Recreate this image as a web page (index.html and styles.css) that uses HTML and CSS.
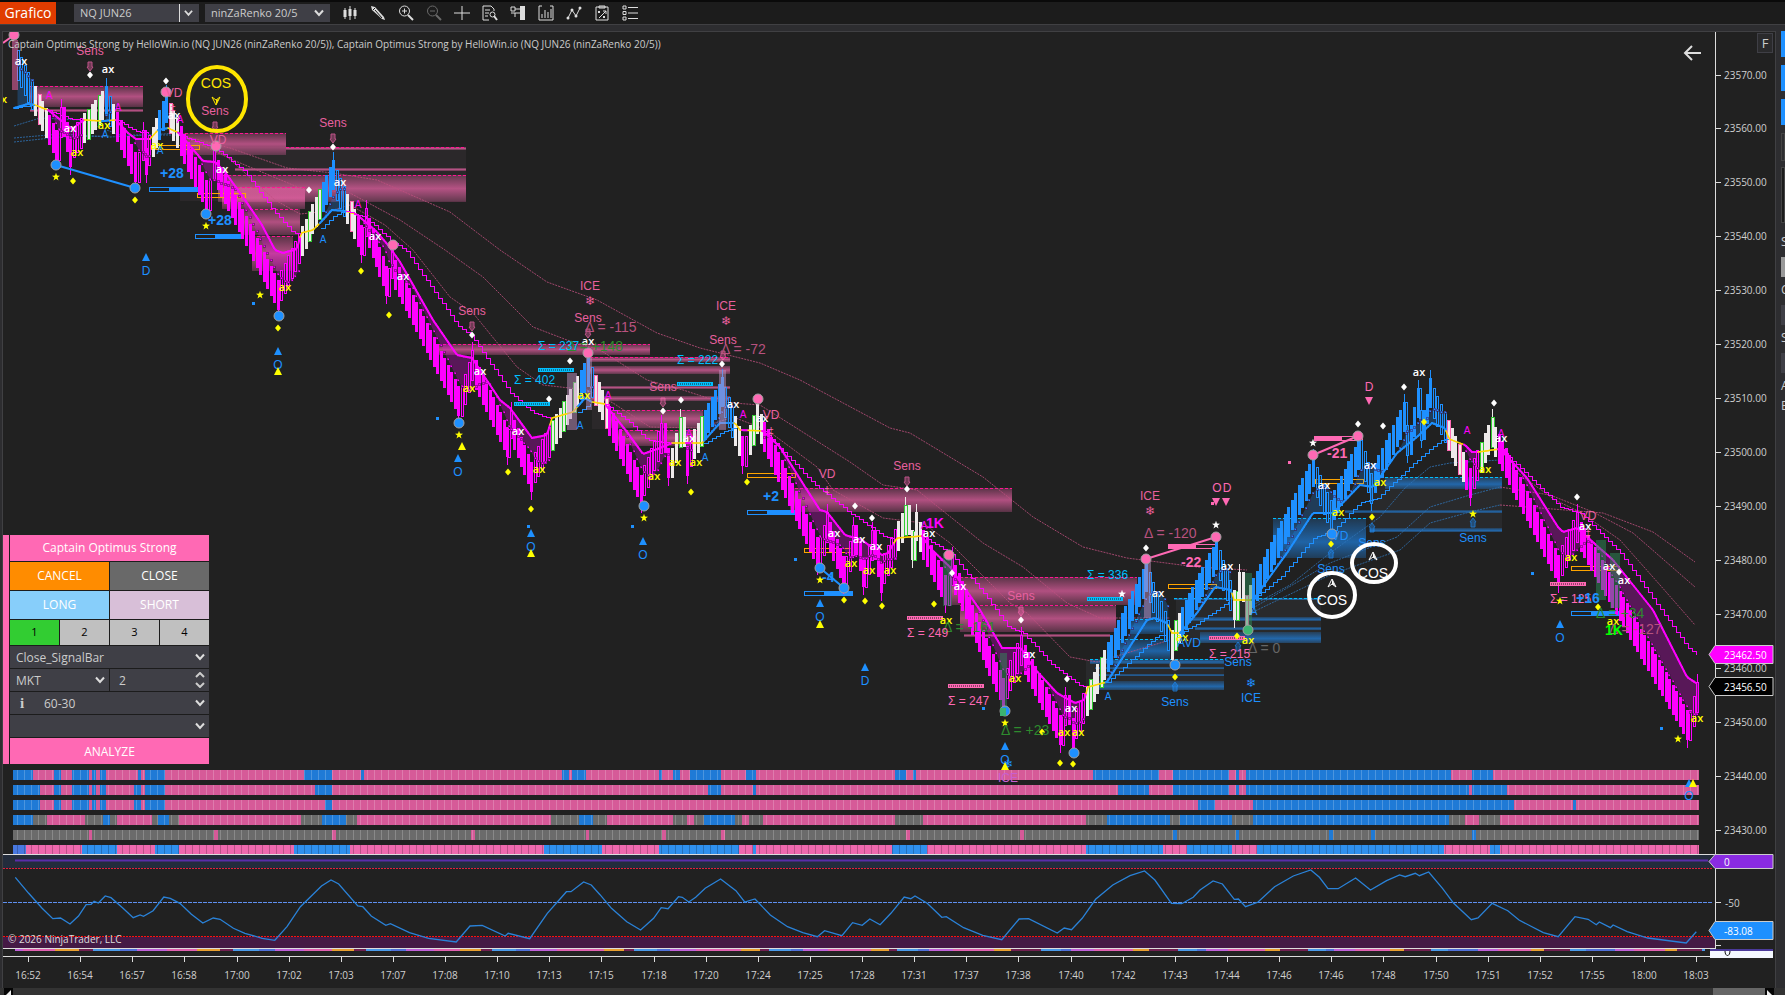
FILE: index.html
```html
<!DOCTYPE html>
<html lang="en">
<head>
<meta charset="utf-8">
<title>Grafico - NQ JUN26</title>
<link rel="stylesheet" href="styles.css">
</head>
<body>
<div class="app">
  <header class="toolbar">
    <h1 class="tab">Grafico</h1>
    <div class="combo combo-instrument">
      <select class="combo-field" aria-label="Instrument"><option>NQ JUN26</option></select>
      <svg class="chev" viewBox="0 0 10 8"><path d="M1 1.500 5 6l4-4.500"/></svg>
    </div>
    <div class="combo combo-interval">
      <select class="combo-field" aria-label="Interval"><option>ninZaRenko 20/5</option></select>
      <svg class="chev" viewBox="0 0 10 8"><path d="M1 1.500 5 6l4-4.500"/></svg>
    </div>
    <nav class="tools">
      <button class="tool" aria-label="Bar style"><svg viewBox="0 0 16 16"><path d="M3 3v11M8 1v14M13 3v11"/><path class="solid" d="M1.500 5h3v7h-3zM6.500 4h3v7h-3zM11.500 5h3v6h-3z"/></svg></button>
      <button class="tool" aria-label="Drawing tools"><svg viewBox="0 0 16 16"><path class="solid" d="M1 1l4 1 9 10 1 3-3-1L2 5z"/><path class="cut" d="M3 5l2-2M5 5l7 8"/></svg></button>
      <button class="tool" aria-label="Zoom in"><svg viewBox="0 0 16 16"><circle cx="6.500" cy="6" r="5"/><path d="M4 6h5M6.500 3.500v5"/><path class="thick" d="M10 10l5 5"/></svg></button>
      <button class="tool dim" aria-label="Zoom out"><svg viewBox="0 0 16 16"><circle cx="6.500" cy="6" r="5"/><path d="M4 6h5"/><path class="thick" d="M10 10l5 5"/></svg></button>
      <button class="tool" aria-label="Crosshair"><svg viewBox="0 0 16 16"><path d="M0 8h16M8 1v14"/></svg></button>
      <button class="tool" aria-label="Data box"><svg viewBox="0 0 16 16"><path d="M7 15H1V1h8l3 3v2M3 5h5M3 8h4M3 11h3"/><circle cx="10.500" cy="9.500" r="2.500"/><path class="thick" d="M12 11l3 4"/></svg></button>
      <button class="tool" aria-label="Chart trader"><svg viewBox="0 0 16 16"><path d="M1 2h4v4H1zM5 4h5M5 8h5M1 8h4v4"/><path class="solid" d="M10 1h5v14h-5z"/></svg></button>
      <button class="tool" aria-label="Strategies"><svg viewBox="0 0 16 16"><path d="M4 1H1v14h14V1h-3M4 13V9M7 13V5M10 13V7M13 13V4"/></svg></button>
      <button class="tool" aria-label="Indicators"><svg viewBox="0 0 16 16"><path d="M2 13L6 5l4 6 4-8"/><circle class="solid" cx="2" cy="13" r="1.500"/><circle class="solid" cx="6" cy="5" r="1.500"/><circle class="solid" cx="10" cy="11" r="1.500"/><circle class="solid" cx="14" cy="3" r="1.500"/></svg></button>
      <button class="tool" aria-label="Performance"><svg viewBox="0 0 16 16"><path d="M2 2h12v13H2zM5 1h6v2H5zM4 6l2 2M6 6L4 8M9 6h3v3M12 6L5 13M9 11l2 2M11 11l-2 2"/></svg></button>
      <button class="tool" aria-label="Properties"><svg viewBox="0 0 16 16"><path d="M1 1h3v3H1zM1 6.500h3v3H1zM1 12h3v3H1zM6 2.500h10M6 8h10M6 13.500h10"/></svg></button>
    </nav>
  </header>
  <main class="workspace">
    <section class="chart">
      <svg id="plot" class="plot" viewBox="3 32 1772 956" role="img" aria-label="Price chart"></svg>
      <p class="caption">Captain Optimus Strong by HelloWin.io (NQ JUN26 (ninZaRenko 20/5)), Captain Optimus Strong by HelloWin.io (NQ JUN26 (ninZaRenko 20/5))</p>
      <button class="back" aria-label="Back"><svg viewBox="0 0 18 16"><path d="M18 8H2M9 1L2 8l7 7"/></svg></button>
      <button class="fixed">F</button>
      <form class="trader">
        <div class="grip"></div>
        <div class="panel">
          <h2 class="panel-title">Captain Optimus Strong</h2>
          <div class="row">
            <button type="button" class="act cancel">CANCEL</button>
            <button type="button" class="act close">CLOSE</button>
          </div>
          <div class="row">
            <button type="button" class="act long">LONG</button>
            <button type="button" class="act short">SHORT</button>
          </div>
          <div class="row">
            <button type="button" class="num on">1</button>
            <button type="button" class="num">2</button>
            <button type="button" class="num">3</button>
            <button type="button" class="num">4</button>
          </div>
          <div class="field"><select class="pick" aria-label="Exit mode"><option>Close_SignalBar</option></select><svg class="chev" viewBox="0 0 10 8"><path d="M1 1.500 5 6l4-4.500"/></svg></div>
          <div class="row">
            <div class="field"><select class="pick" aria-label="Order type"><option>MKT</option></select><svg class="chev" viewBox="0 0 10 8"><path d="M1 1.500 5 6l4-4.500"/></svg></div>
            <div class="field"><input class="pick" type="text" value="2" aria-label="Quantity"><svg class="spin" viewBox="0 0 10 16"><path d="M1 5l4-4 4 4M1 11l4 4 4-4"/></svg></div>
          </div>
          <div class="field"><span class="info">i</span><select class="pick pick-info" aria-label="ATM strategy"><option>60-30</option></select><svg class="chev" viewBox="0 0 10 8"><path d="M1 1.500 5 6l4-4.500"/></svg></div>
          <div class="field"><select class="pick" aria-label="Template"><option></option></select><svg class="chev" viewBox="0 0 10 8"><path d="M1 1.500 5 6l4-4.500"/></svg></div>
          <button type="button" class="analyze">ANALYZE</button>
        </div>
      </form>
      <p class="copyright">© 2026 NinjaTrader, LLC</p>
    </section>
    <aside class="side">
      <span class="blue-key"></span><span class="blue-key"></span><span class="blue-key"></span>
      <span class="dark-key"></span><span class="dark-key tall"></span>
      <span class="side-text">S</span><span class="side-box light"></span>
      <span class="side-text">C</span><span class="side-box"></span>
      <span class="side-text">S</span><span class="side-box"></span>
      <span class="side-text">A</span><span class="side-text">E</span>
    </aside>
  </main>
  <footer class="scroll"><span class="arrow"><svg viewBox="0 0 8 7"><path d="M7 2v5H2z"/></svg></span><span class="thumb"></span><span class="arrow"><svg viewBox="0 0 8 7"><path d="M2 2l5 5H2z"/></svg></span></footer>
</div>
<script src="chart.js"></script>
</body>
</html>
```
FILE: styles.css
```css
* { box-sizing: border-box; }
body { margin: 0; background: #2d2d30; color: #ccc; font: 12px "Open Sans", "Noto Sans", sans-serif; overflow: hidden; }
button, select, input { font: inherit; color: inherit; border: 0; border-radius: 0; margin: 0; padding: 0; background: none; appearance: none; }
h1, h2, p { margin: 0; font-weight: 400; }
.app { display: flex; flex-direction: column; height: 100vh; }
.toolbar { display: flex; align-items: center; height: 25px; flex: none; background: #1c1c1c; border-top: 2px solid #0a0a0a; border-bottom: 1px solid #404043; }
.tab { width: 56px; height: 22px; background: #e03c00; color: #fff; font-size: 14px; line-height: 21px; text-align: center; }
.combo { position: relative; height: 18px; background: #3f3f46; }
.combo-instrument { width: 125px; margin-left: 18px; }
.combo-interval { width: 125px; margin-left: 6px; }
.combo-field { width: 100%; height: 18px; padding-left: 6px; font-size: 11px; line-height: 18px; }
.chev { position: absolute; right: 6px; top: 50%; width: 10px; height: 8px; margin-top: -4px; fill: none; stroke: #ddd; stroke-width: 2; pointer-events: none; }
.combo-instrument .chev { right: 0; top: 0; width: 20px; height: 18px; margin-top: 0; padding: 0 6px 0 4px; border-left: 1px solid #ddd; }
.tools { display: flex; gap: 12px; margin-left: 12px; }
.tool { width: 16px; height: 16px; }
.tool svg { display: block; width: 16px; height: 16px; fill: none; stroke: #ddd; stroke-width: 1; }
.tool .solid { fill: #ddd; stroke: none; }
.tool .cut { stroke: #1c1c1c; }
.tool .thick { stroke-width: 2; }
.dim { opacity: .4; }
.workspace { flex: 1; min-height: 0; display: flex; padding: 6px 0 0 2px; }
.chart { position: relative; flex: 1; background: #212121; border: 1px solid #404043; border-width: 1px 0 0 1px; }
.plot { display: block; width: 100%; height: 100%; }
.caption { position: absolute; left: 5px; top: 4px; font-size: 10px; line-height: 16px; white-space: nowrap; }
.copyright { position: absolute; left: 5px; bottom: 41px; font-size: 10px; line-height: 16px; color: #ddd; }
.back { position: absolute; right: 74px; top: 13px; width: 18px; height: 16px; }
.back svg { display: block; width: 18px; height: 16px; fill: none; stroke: #ddd; stroke-width: 2; }
.fixed { position: absolute; right: 2px; top: 1px; width: 16px; height: 20px; border: 1px solid #3f3f46; background: #2a2a2c; font-size: 13px; line-height: 17px; }
.side { display: flex; flex-direction: column; width: 10px; border-left: 1px solid #404043; padding-left: 5px; overflow: hidden; }
.blue-key { height: 26px; margin-bottom: 8px; background: #1e90ff; flex: none; }
.dark-key { height: 28px; margin-bottom: 6px; border: 1px solid #444; flex: none; }
.dark-key.tall { height: 56px; margin-bottom: 10px; background: #1c1c1c; }
.side-text { height: 20px; line-height: 18px; flex: none; }
.side-box { height: 20px; margin: 4px 0 4px; background: #3f3f46; flex: none; }
.side-box.light { background: #999; }
.scroll { display: flex; height: 7px; flex: none; background: #333; padding: 0 11px 0 4px; }
.thumb { width: 52px; margin-left: auto; background: #666; }
.arrow { width: 9px; background: #050505; }
.arrow svg { display: block; width: 8px; height: 7px; fill: #eee; }
.trader { position: absolute; left: 0; top: 503px; display: flex; gap: 1px; width: 206px; background: #1c1c1c; }
.grip { width: 6px; background: #ff69b4; }
.panel { flex: 1; display: flex; flex-direction: column; gap: 1px; }
.panel-title, .analyze { height: 26px; line-height: 25px; background: #ff69b4; color: #fff; font-size: 12px; text-align: center; }
.row { display: flex; gap: 1px; }
.row > * { flex: 1; min-width: 0; }
.act { height: 28px; padding-bottom: 2px; color: #fff; }
.cancel { background: #ff8c00; }
.close { background: #696969; }
.long { background: #87cefa; }
.short { background: #d8bfd8; }
.num { height: 25px; padding-bottom: 2px; background: #c0c0c0; color: #000; font-size: 11px; }
.num.on { background: #32cd32; }
.field { position: relative; display: flex; height: 22px; background: #3f3f46; }
.pick { width: 100%; height: 22px; padding-left: 6px; }
input.pick { padding-left: 9px; }
.pick-info { padding-left: 15px; }
.info { width: 20px; padding-left: 10px; font: bold 15px/22px "Liberation Serif", serif; }
.field .chev { right: 4px; }
.spin { position: absolute; right: 4px; top: 3px; width: 10px; height: 16px; fill: none; stroke: #ccc; stroke-width: 2; }
.plot text { text-anchor: middle; font-family: "Liberation Sans", Arial, sans-serif; font-size: 12px; }
.plot .start { text-anchor: start; }
.plot .ax { font-family: "Open Sans", sans-serif; font-weight: 600; font-size: 11px; }
.plot .axis { font-family: "Open Sans", sans-serif; font-size: 10px; fill: #d0d0d0; }
.plot .tag { fill: #fff; }
.plot .small { font-size: 10px; }
.plot .delta { font-size: 14px; }
.plot .bold { font-size: 14px; font-weight: 700; }
.plot .cos { font-size: 14px; }
.crisp { shape-rendering: crispEdges; }
```
FILE: chart.js
```js
const M = '#ff00ff', B = '#1e90ff', P = '#ff69b4', W = '#eeeaea', Y = '#ffff00', C = '#00bfff';
const out = [];
const add = s => out.push(s);
const pts = a => a.map(p => p.join(',')).join(' ');
const rect = (x, y, w, h, f, extra = '') => add(`<rect class="crisp" x="${x}" y="${y}" width="${w}" height="${h}" fill="${f}" ${extra}/>`);
const line = (a, c, w = 1, extra = '') => add(`<polyline points="${pts(a)}" fill="none" stroke="${c}" stroke-width="${w}" ${extra}/>`);
const text = (x, y, s, c, cls = '') => add(`<text x="${x}" y="${y + (cls.includes('axis') ? 4 : 5)}" fill="${c}" class="${cls}">${s}</text>`);
const lerp = (a, x) => {
  for (let i = 1; i < a.length; i++) if (x <= a[i][0]) {
    const [p, q] = [a[i - 1], a[i]];
    return p[1] + (q[1] - p[1]) * (x - p[0]) / ((q[0] - p[0]) || 1);
  }
  return a[a.length - 1][1];
};

add(`<defs>
<linearGradient id="gp" x2="0" y2="1"><stop offset="0" stop-color="${P}" stop-opacity=".25"/><stop offset=".5" stop-color="${P}" stop-opacity=".65"/><stop offset="1" stop-color="${P}" stop-opacity=".25"/></linearGradient>
<linearGradient id="gb" x2="0" y2="1"><stop offset="0" stop-color="${B}" stop-opacity=".2"/><stop offset=".6" stop-color="${B}" stop-opacity=".6"/><stop offset="1" stop-color="${B}" stop-opacity=".25"/></linearGradient>
<pattern id="bars" width="7" height="10" patternUnits="userSpaceOnUse"><rect x="3" width="1" height="10" fill="#fff" opacity=".2"/></pattern>
<pattern id="bars2" width="7" height="10" patternUnits="userSpaceOnUse"><rect x="3" width="1" height="10" fill="#000" opacity=".22"/></pattern></defs>`);

// Supply and demand zones: x1, y1, x2, y2, dashed top edge
rect(180, 147, 286, 54, '#2b282a');
rect(592, 357, 138, 72, '#2b282a');
rect(1086, 660, 138, 30, '#292a2c');
rect(1176, 598, 145, 45, '#292a2c');
rect(1370, 477, 132, 55, '#292a2c');
[[30, 86, 143, 107, 1], [30, 109, 143, 112], [180, 133, 286, 155, 1], [286, 147, 466, 150, 1], [235, 168, 466, 171],
 [218, 175, 466, 202, 1], [222, 187, 305, 209, 1], [240, 209, 300, 235, 1], [252, 236, 293, 271, 1], [433, 344, 650, 355, 1], [590, 357, 730, 362, 1],
 [590, 366, 730, 374], [590, 386, 730, 389], [592, 396, 730, 401], [607, 410, 703, 428, 1], [615, 430, 703, 446, 1],
 [790, 488, 1012, 512, 1], [950, 577, 1137, 605, 1], [960, 605, 1116, 632, 1], [964, 634, 1110, 637]].forEach(([x, y, u, v, d]) => {
  rect(x, y, u - x, v - y, 'url(#gp)');
  if (d) line([[x, y + .5], [u, y + .5]], '#ff1493', 1, 'stroke-dasharray="3 2"');
});
[[1130, 619, 1165, 634, 1], [1120, 639, 1170, 659, 1], [1090, 659, 1224, 664, 1], [1095, 667, 1224, 669], [1095, 674, 1224, 676], [1090, 681, 1224, 690],
 [1174, 598, 1321, 600, 1], [1185, 617, 1321, 621], [1195, 627, 1321, 630], [1200, 632, 1321, 643],
 [1273, 518, 1366, 558, 1], [1385, 477, 1502, 489, 1], [1345, 510, 1502, 513], [1370, 528, 1502, 532]].forEach(([x, y, u, v, d]) => {
  rect(x, y, u - x, v - y, 'url(#gb)');
  if (d) line([[x, y + .5], [u, y + .5]], C, 1, 'stroke-dasharray="3 2"');
});

// Slow averages
const dots = 'stroke-dasharray="2 1" opacity=".8"';
[[[180, 135], [230, 148], [287, 168], [333, 173], [377, 180], [450, 212], [500, 250], [547, 282], [597, 300], [657, 333], [700, 348], [760, 363], [800, 380], [890, 428], [910, 433], [983, 477], [1033, 517], [1083, 547], [1127, 558], [1197, 567], [1247, 570]],
 [[180, 135], [233, 160], [300, 188], [350, 193], [400, 220], [445, 250], [483, 277], [533, 327], [567, 340], [600, 350], [647, 380], [683, 390], [720, 402], [760, 405], [850, 462], [883, 485], [917, 490], [983, 543], [1023, 567], [1067, 603], [1100, 618], [1170, 618]],
 [[180, 135], [225, 155], [275, 200], [300, 214], [330, 211], [350, 205], [385, 225], [413, 250], [450, 297], [473, 313], [517, 367], [543, 385], [587, 390], [613, 403], [650, 427], [700, 428], [733, 417], [767, 430], [817, 467], [833, 490], [883, 518], [923, 523], [950, 543], [1010, 603], [1027, 613], [1070, 657], [1097, 662], [1170, 640]],
 [[1500, 505], [1540, 508], [1603, 513], [1653, 532], [1695, 562]], [[1500, 487], [1550, 495], [1593, 512], [1633, 533], [1695, 587]], [[1500, 460], [1555, 500], [1580, 512], [1620, 540], [1660, 585], [1695, 625]]
].forEach(a => line(a, '#c05080', 1, dots));
[[[14, 126], [40, 118], [80, 120], [120, 135], [180, 135]], [[14, 138], [60, 134], [110, 137], [180, 133]], [[14, 142], [60, 137], [110, 136]],
 [[1253, 605], [1290, 585], [1330, 553], [1380, 517], [1405, 488], [1430, 467], [1450, 463], [1500, 460]], [[1253, 608], [1330, 563], [1397, 537], [1430, 507], [1470, 495], [1500, 487]], [[1253, 612], [1330, 575], [1400, 550], [1430, 523], [1470, 512], [1500, 505]]
].forEach(a => line(a, '#2f74b8', 1, dots));

// Measurement bars and their values
const gauge = (x, y, c, w = 48) => rect(x + .5, y + .5, w, 4, 'none', `stroke="${c}"`);
[[151, 145], [197, 193], [747, 473], [804, 548], [1168, 584], [1315, 479], [1571, 566]].forEach(([x, y]) => gauge(x, y, '#ffa500'));
[[149, 187, B], [195, 234, B], [747, 510, B], [804, 591, B], [1571, 611, B], [1168, 544, P], [1314, 436, P]].forEach(([x, y, c]) => { gauge(x, y, c); rect(c === B ? x + 20 : x, y, 28, 5, c); });
[[160, 173, '+28', B], [208, 220, '+28', B], [763, 496, '+2', B], [822, 577, '-4', B], [1181, 562, '-22', P], [1327, 453, '-21', P]].forEach(([x, y, s, c]) => text(x, y, s, c, 'start bold'));

// Trend colour by x
const trend = [[34, B], [48, W], [84, M], [103, W], [110, B], [116, W], [151, M], [158, W], [168, B], [179, W], [301, M], [321, W], [346, B], [356, W], [550, M], [578, W], [592, B], [606, W], [672, M], [686, W], [693, M], [704, W], [735, B], [742, W], [748, M], [763, W], [895, M], [923, W], [1086, M], [1107, W], [1169, B], [1180, W], [1232, B], [1253, W], [1446, B], [1465, W], [1479, M], [1498, W], [1800, M]];
const tone = x => trend.find(t => x < t[0])[1];

// Swing pivots and the bars between them
const piv = [[14, 40], [56, 160], [61, 107], [70, 167], [106, 86], [135, 182], [143, 130], [146, 175], [166, 93], [206, 210], [214, 150], [278, 310], [333, 160], [361, 255], [366, 208], [386, 296], [392, 250], [458, 416], [472, 350], [507, 457], [511, 410], [531, 492], [588, 357], [641, 505], [661, 423], [668, 478], [680, 417], [687, 476], [722, 377], [742, 466], [757, 404], [817, 567], [827, 512], [843, 586], [853, 525], [863, 587], [872, 530], [881, 593], [905, 505], [912, 560], [916, 512], [945, 605], [952, 555], [1003, 708], [1021, 635], [1060, 745], [1065, 695], [1073, 748], [1146, 562], [1172, 660], [1216, 540], [1234, 620], [1239, 572], [1246, 625], [1313, 457], [1331, 530], [1358, 440], [1371, 503], [1404, 402], [1407, 455], [1418, 388], [1421, 440], [1430, 378], [1470, 498], [1492, 417], [1558, 585], [1577, 512], [1687, 740], [1697, 682]];
const bars = [];
for (let i = 1; i < piv.length; i++) {
  const [x0, y0] = piv[i - 1], [x1, y1] = piv[i], down = y1 > y0;
  const size = Math.abs(y1 - y0), h = Math.min(30, size * .6), lag = size > 70 ? 10 : 0;
  const n = Math.max(2, Math.round((x1 - x0) / 3.5));
  const first = down ? y0 + lag : y0 - lag - h, final = down ? y1 - h : y1;
  for (let k = 1; k <= n; k++) {
    const f = (k - 1) / (n - 1), x = x0 + (x1 - x0) * k / n;
    bars.push({ x, top: first + (final - first) * f, h, down, end: k === n });
  }
}

// Main average
const avg = [[14, 108], [28, 104], [35, 105], [48, 110], [62, 121], [72, 129], [84, 120], [103, 121], [116, 120], [128, 133], [136, 139], [150, 139], [158, 130], [168, 128], [179, 133], [203, 161], [215, 162], [225, 172], [243, 197], [262, 225], [275, 250], [283, 253], [297, 249], [301, 233], [313, 230], [321, 222], [332, 210], [345, 211], [356, 214], [375, 230], [388, 245], [400, 262], [433, 320], [457, 355], [472, 358], [500, 400], [510, 408], [532, 438], [547, 435], [552, 418], [573, 412], [585, 398], [592, 402], [605, 404], [627, 432], [643, 454], [660, 448], [672, 443], [702, 443], [720, 423], [735, 423], [740, 430], [763, 431], [780, 447], [807, 490], [820, 510], [827, 512], [845, 535], [862, 540], [882, 555], [888, 553], [897, 538], [922, 536], [930, 548], [950, 567], [980, 610], [1002, 648], [1021, 648], [1033, 667], [1057, 693], [1075, 703], [1084, 700], [1088, 687], [1107, 682], [1147, 620], [1155, 618], [1167, 623], [1172, 633], [1180, 633], [1197, 613], [1215, 587], [1231, 590], [1234, 600], [1253, 600], [1287, 553], [1313, 513], [1333, 513], [1360, 485], [1373, 487], [1397, 453], [1417, 437], [1432, 423], [1445, 428], [1449, 439], [1465, 445], [1472, 452], [1478, 452], [1500, 449], [1527, 478], [1558, 527], [1563, 532], [1577, 528], [1613, 560], [1653, 610], [1687, 677], [1696, 683]];
const fast = bars.map((b, i) => {
  const s = bars.slice(Math.max(0, i - 6), i + 1);
  return [b.x, s.reduce((t, q) => t + q.top + q.h / 2, 0) / s.length];
});
const ribbonDots = [];
let run = [], last = null;
const flush = c => {
  if (run.length > 1 && c !== W) {
    add(`<polygon points="${pts(run)} ${pts(run.map(p => [p[0], lerp(avg, p[0])]).reverse())}" fill="${c}" opacity=".25"/>`);
    run.forEach(p => ribbonDots.push([Math.round(p[0]), Math.round(p[1]), c]));
  }
  run = [];
};
fast.forEach(p => {
  const c = tone(p[0]), a = lerp(avg, p[0]), ok = c === M ? p[1] > a : p[1] < a;
  if (c !== last || !ok) flush(last);
  if (ok) run.push(p);
  last = c;
});
flush(last);

bars.forEach((b, i) => {
  const c = tone(b.x), x = Math.round(b.x) - 1, t = Math.round(b.top), h = Math.round(b.h);
  if (b.end) rect(x + 1, b.down ? t : t - 8, 1, h + 8, c);
  if (c === W) rect(x, t, 3, h, W, h > 20 && i % 3 === 0 ? `stroke="${b.down ? P : '#32cd32'}" stroke-width="1"` : '');
  else if (b.down === (c === M)) rect(x, t, 3, h, c);
  else add(`<rect class="crisp" x="${x + .5}" y="${t + .5}" width="2" height="${h}" fill="#212121" fill-opacity=".6" stroke="${c}"/>`);
});
ribbonDots.forEach(([x, y, c]) => rect(x - 1, y - 1, 2, 2, c, 'stroke="#45104a" stroke-width=".5"'));

// Average coloured by trend
for (let x = 14; x < 1696; x += 2) {
  const c = tone(x + 1);
  line([[x, lerp(avg, x)], [x + 2, lerp(avg, x + 2)]], c === W ? '#ffd700' : c, c === W ? 1.5 : 2, 'stroke-linecap="round"');
}
// Stepped trailing stop
const step = (a, c) => {
  const r = [];
  let y = a[0][1];
  for (let x = a[0][0]; x <= a[a.length - 1][0]; x += 4) { r.push([x, y]); y = Math.round(lerp(a, x)) + .5; r.push([x, y]); }
  line(r, c, 1, 'class="crisp"');
};
[[[48, 110], [72, 119], [84, 120]], [[116, 120], [136, 131], [150, 133]], [[179, 135], [215, 148], [243, 170], [275, 213], [293, 233], [301, 233]], [[346, 211], [365, 217], [390, 240], [405, 250], [457, 325], [472, 337], [510, 393], [533, 413], [550, 418]], [[605, 404], [627, 420], [647, 440], [672, 443]], [[763, 431], [813, 483], [850, 513], [885, 537], [897, 538]], [[923, 537], [950, 553], [983, 593], [1008, 627], [1022, 632], [1050, 663], [1080, 686], [1087, 686]], [[1500, 449], [1560, 507], [1580, 513], [1620, 553], [1687, 647], [1698, 655]]].forEach(a => step(a, M));
[[[14, 108], [34, 104]], [[321, 228], [333, 216], [346, 210]], [[578, 412], [592, 402]], [[704, 443], [722, 432], [736, 427]], [[1107, 682], [1157, 635], [1169, 635]], [[1180, 633], [1197, 623], [1230, 600]], [[1253, 598], [1280, 577], [1313, 538], [1333, 530], [1360, 502], [1377, 498], [1413, 463], [1440, 440], [1449, 439]]].forEach(a => step(a, B));

// Volume highlights
[[12, 40, 6, 50, P], [567, 373, 10, 57, '#c090c0'], [586, 358, 6, 52, '#c090c0'], [719, 370, 7, 60, '#c090c0'], [1144, 562, 7, 56, '#c090c0'], [943, 553, 9, 53, '#2e8b57'], [1000, 653, 7, 62, '#2e8b57'], [1245, 573, 7, 56, '#2e8b57'], [1596, 540, 10, 60, '#2e8b57'], [1610, 553, 10, 55, '#2e8b57']].forEach(a => rect(...a, 'opacity=".5"'));

// Volume sums
[[538, 368, C], [514, 402, C], [677, 382, C], [1087, 597, C], [907, 616, P], [948, 684, P], [1209, 636, P], [1550, 582, P]].forEach(([x, y, c]) => { rect(x, y, 36, 4, c); line([[x + 1, y + 2], [x + 35, y + 2]], '#212121', 1, 'stroke-dasharray="1 1"'); });

// Divergence lines and pivots
[[[3, 43], [14, 35], P], [[56, 165], [135, 188], B], [[820, 568], [844, 588], B], [[1146, 559], [1216, 537], P], [[1313, 455], [1358, 436], P]].forEach(([a, b, c]) => line([a, b], c, 2));
const dot = (x, y, c) => add(`<circle cx="${x}" cy="${y}" r="5" fill="${c}" stroke="#a0a0a0"/>`);
[[14, 35], [166, 92], [216, 146], [393, 245], [588, 353], [758, 399], [949, 555], [1146, 559], [1216, 537], [1313, 455], [1358, 436]].forEach(p => dot(...p, P));
[[56, 165], [135, 188], [206, 214], [279, 316], [459, 423], [644, 506], [820, 568], [844, 588], [1005, 711], [1074, 753], [1175, 665], [1332, 534]].forEach(p => dot(...p, B));
dot(1248, 630, '#3cb371'); rect(1000, 708, 6, 8, '#3cb371');

const star = (x, y, c) => add(`<polygon points="${[...Array(10)].map((_, i) => { const r = i % 2 ? 1.7 : 4.2, a = i * Math.PI / 5; return (x + r * Math.sin(a)).toFixed(1) + ',' + (y - r * Math.cos(a)).toFixed(1); }).join(' ')}" fill="${c}"/>`);
[[56, 177], [206, 226], [260, 295], [459, 435], [644, 518], [820, 580], [1005, 723], [1473, 514], [1560, 601], [1678, 739]].forEach(p => star(...p, Y));
[[1122, 594], [1216, 525], [1313, 443]].forEach(p => star(...p, '#fff'));
const gem = (x, y, c) => add(`<path d="M${x} ${y - 3.5}l3 3.500-3 3.500-3-3.500z" fill="${c}"/>`);
[[73, 181], [135, 200], [278, 328], [361, 271], [389, 315], [508, 472], [531, 509], [691, 492], [747, 482], [844, 600], [865, 601], [882, 606], [934, 604], [1042, 732], [1060, 763], [1073, 764], [1175, 677], [1237, 636], [1331, 544], [1372, 517], [1424, 422], [1598, 607]].forEach(p => gem(...p, Y));
[[90, 75], [166, 81], [309, 190], [333, 147], [472, 335], [549, 399], [570, 361], [663, 411], [681, 400], [722, 364], [855, 506], [872, 518], [907, 489], [952, 573], [1021, 620], [1067, 679], [1146, 548], [1358, 424], [1383, 426], [1404, 387], [1494, 403], [1577, 497], [1619, 572]].forEach(p => gem(...p, '#fff'));
[[253, 303], [437, 418], [528, 526], [632, 526], [795, 559], [983, 708], [1532, 573], [1661, 728]].forEach(([x, y]) => rect(x - 1, y - 1, 3, 3, B));
[[1289, 462], [1212, 503]].forEach(([x, y]) => rect(x - 1, y - 1, 3, 3, P));

// Labels
[[21, 61], [108, 69], [70, 128], [174, 115], [222, 169], [340, 182], [375, 236], [403, 276], [480, 371], [518, 431], [588, 341], [689, 438], [733, 404], [762, 418], [834, 533], [859, 539], [876, 546], [929, 533], [960, 586], [1029, 654], [1071, 708], [1158, 593], [1227, 566], [1324, 485], [1370, 465], [1419, 372], [1501, 438], [1585, 526], [1609, 566], [1624, 580]].forEach(([x, y]) => text(x, y - 1, 'ax', '#fff', 'ax'));
[[77, 152], [104, 125], [157, 145], [285, 287], [469, 388], [539, 469], [584, 395], [654, 476], [675, 462], [696, 462], [851, 563], [869, 570], [890, 570], [946, 620], [1015, 678], [1064, 732], [1078, 732], [1182, 637], [1248, 640], [1338, 512], [1380, 482], [1485, 469], [1571, 557], [1613, 621], [1697, 718]].forEach(([x, y]) => text(x, y - 1, 'ax', Y, 'ax'));
text(4, 98, 'x', Y, 'ax');
const small = (x, y, up, c) => add(`<path d="M${x - 2} ${y - 4}h4v5h1l-3 4-3-4h1z" fill="${c}" fill-opacity=".5" stroke="${c}" opacity=".7" ${up ? `transform="rotate(180 ${x} ${y})"` : ''}/>`);
[[90, 50], [215, 110], [333, 122], [472, 310], [588, 317], [723, 339], [663, 386], [907, 465], [1021, 595]].forEach(([x, y]) => { text(x, y, 'Sens', '#e8609f'); small(x, y + 16, 0, P); });
[[1175, 701], [1331, 568], [1372, 542], [1238, 661], [1473, 537]].forEach(([x, y]) => { text(x, y, 'Sens', B); small(x, y - 14, 1, B); });
[[174, 92], [218, 139], [771, 414], [827, 473], [1588, 515]].forEach(([x, y]) => text(x, y, 'VD', '#e8609f'));
[[173, 107], [771, 430], [827, 489], [1588, 532]].forEach(([x, y]) => text(x, y, '‡', P, 'small'));
[[590, 285], [726, 305], [1150, 495]].forEach(([x, y]) => { text(x, y, 'ICE', '#e8609f'); text(x, y + 15, '❄', '#e8609f'); });
text(1251, 697, 'ICE', B); text(1251, 682, '❄', B);
text(1189, 642, 'AVD', B); text(1340, 535, 'VD', B);
const tri = (x, y, c, d = 1) => add(`<polygon points="${x - 4},${y + 4 * d} ${x + 4},${y + 4 * d} ${x},${y - 4 * d}" fill="${c}"/>`);
[['D', 146, 270, 257], ['D', 865, 680, 667], ['O', 278, 364, 351, 278, 371], ['O', 458, 471, 458, 462, 446], ['O', 531, 546, 533, 531, 553], ['O', 643, 554, 541], ['O', 820, 616, 603, 820, 624], ['O', 1005, 759, 746], ['O', 1560, 637, 624]].forEach(([s, x, y, t, u, v]) => { text(x, y, s, B); tri(x, t, B); if (u) tri(u, v, Y); });
text(1217, 487, 'O', P); text(1227, 487, 'D', P); tri(1216, 502, P, -1); tri(1226, 502, P, -1);
text(1369, 386, 'D', P); tri(1369, 401, P, -1);
[[49, 94], [118, 106], [180, 118], [358, 203], [608, 394], [689, 432], [743, 413], [924, 524], [1467, 429], [1501, 432]].forEach(([x, y]) => text(x, y, 'A', M, 'small'));
[[105, 133], [160, 149], [323, 238], [580, 424], [705, 456], [1108, 695], [1254, 610]].forEach(([x, y]) => text(x, y, 'A', B, 'small'));
[[585, 327, 'Δ = -115', '#b8527f'], [567, 346, 'Δ = +148', '#2e8b2e'], [721, 349, 'Δ = -72', '#b8527f'], [1144, 533, 'Δ = -120', '#b8527f'], [943, 627, 'Δ = -161', '#2e8b2e'], [1001, 730, 'Δ = +23', '#2e8b2e'], [1248, 648, 'Δ = 0', '#666'], [1596, 613, 'Δ = +34', '#2e8b2e'], [1609, 629, 'Δ = -127', '#b8527f']].forEach(([x, y, s, c]) => text(x, y, s, c, 'start delta'));
[[538, 345, 237, C], [514, 379, 402, C], [677, 359, 222, C], [1087, 574, 336, C], [907, 632, 249, P], [948, 700, 247, P], [1209, 653, 215, P], [1550, 598, 125, P]].forEach(([x, y, n, c]) => text(x, y, 'Σ = ' + n, c, 'start'));
[[1576, 598, '+16', B], [926, 523, '1K', M], [1605, 630, '1K', '#00ff00']].forEach(([x, y, s, c]) => text(x, y, s, c, 'start bold'));

// COS signals
[[217, 99, 29, 32, '#ffe600'], [1332, 595, 23, 22, '#fff'], [1374, 563, 22, 19, '#fff']].forEach(([x, y, a, b, c]) => add(`<ellipse cx="${x}" cy="${y}" rx="${a}" ry="${b}" fill="none" stroke="${c}" stroke-width="4"/>`));
text(216, 83, 'COS', '#ffe600', 'cos'); text(1332, 600, 'COS', '#fff', 'cos'); text(1373, 573, 'COS', '#fff', 'cos');
add('<path d="M212 97l4 8 4-8-4 3z" fill="#212121" stroke="#ffe600"/><path d="M216 100v5l3-6z" fill="#ffe600"/><path d="M1328 587l4-8 4 8-4-3zM1369 560l4-8 4 8-4-3z" fill="#212121" stroke="#fff"/><path d="M1332 579v5l3 2zM1373 552v5l3 2z" fill="#fff"/>');

// Status strips; column edges are measured in three spans
const span = [[0, 2.613], [600, 2.613], [1200, 2.68]];
const shade = { b: '#1f7ad6', p: '#d65a98', g: '#6b6b6b', v: '#4878e0', Q: '#ee69ae', U: '#2f90ee' };
[['34b86p141b159p188b233p240b251p260b277p360b368p379b431p794b868p942b951p1469b1487p1495b1531p', '154b162p191b210p235b316p382b408p771b800p818b826p1288b1461p1498b', '78p96b105p123b673p730b785p'],
 ['34b105p141b159p188b233p240b251p260b277p350b368p379b431p823b868p', '282b316p400b408p1354b1435p1498b', '78p96b105p123b721p730b823p'],
 ['34b105p141b159p188b233p240b251p260b277p350b368p379b431p850b868p', '1563b', '40p142b842p1000b1008p'],
 ['34b86g123p221g270b288g306p397g414b441g468p787g842b904g933p1441g1513b1549g', '18p191g228p246g272b354g371p390g427p771g845p1270g1325b1490g1516b', '86g142b666g710p748g803p'],
 ['34g233p240g559p570g868p877g1231p1241g1531p1540g', '162p172g316p327g800p809g1098p1108g1498b1508g', '96b105g347b356g458b469g729b740g'],
 ['34v68Q214U306Q405U468Q768U915Q1422U', '4Q154U363Q400U408Q763U855Q1270U1471Q1534U', '86Q153U654Q777U803Q']].forEach((row, i) => {
  const seg = row.flatMap((s, k) => [...s.matchAll(/(\d+)([a-zA-Z])/g)].map(m => [Math.round(span[k][0] + m[1] / span[k][1]), m[2]]));
  const y = 770 + i * 15, h = i === 5 ? 9 : 10;
  seg.forEach(([x, c], k) => rect(x, y, (seg[k + 1] ? seg[k + 1][0] : 1699) - x, h, shade[c]));
  rect(13, y, 1686, h, i === 5 ? 'url(#bars2)' : 'url(#bars)');
});
text(1008, 777, 'ICE', '#c85fd0'); text(1008, 763, '❄', B); tri(1005, 766, Y);
text(1689, 795, 'O', B); tri(1689, 783, B); tri(1693, 783, Y);

// Oscillator
rect(3, 855, 1712, 13, '#232c3c');
rect(3, 937, 1712, 11, '#451a45');
rect(3, 854, 1712, 1, '#ddd');
line([[15, 860.5], [1708, 860.5]], '#5a2da8', 2);
line([[3, 868.5], [1713, 868.5]], '#e0203c', 1, 'stroke-dasharray="2 1"');
line([[3, 936.5], [1713, 936.5]], '#ff1010', 1, 'stroke-dasharray="2 1"');
line([[3, 902.5], [1713, 902.5]], '#5f90f0', 1, 'stroke-dasharray="4 1"');
const osc = [
 [40,352,75,400,110,445,138,476,158,474,183,492,205,468,225,434,238,433,246,424,257,429,275,408,290,413,320,443,348,473,366,465,375,469,400,452,428,411,445,415,470,430,500,463,530,489,557,474,575,478,610,505,640,520,685,535,718,541,750,500,785,440,840,378,865,360,885,372,935,438,948,440,970,468,1008,496,1020,491,1070,518,1120,535,1192,546,1228,498,1260,496,1320,528,1328,520,1384,536,1430,460,1480,395,1492,395,1525,366,1545,375],
 [0,404,30,445,70,485,106,510,140,475,160,443,178,446,205,410,215,412,232,426,250,412,275,385,315,357,355,392,378,426,405,417,445,465,490,500,530,518,568,530,587,512,632,527,660,488,685,496,705,477,732,494,760,460,795,411,812,416,823,408,855,430,893,472,905,470,950,503,1000,526,1050,539,1095,477,1120,476,1195,519,1213,504,1232,509,1260,475,1295,418,1340,375,1385,347,1423,333,1450,360,1493,430,1520,431,1550,412],
 [0,390,35,363,60,372,92,418,103,417,122,440,155,427,200,380,250,348,297,330,320,352,343,386,370,386,417,354,457,390,500,362,535,345,550,350,577,340,588,347,613,336,650,385,680,430,727,479,745,474,783,430,825,452,855,480,920,518,960,530,1005,470,1040,478,1062,494,1070,486,1100,503,1107,495,1145,515,1200,534,1303,549,1330,515]];
const curve = [];
osc.forEach((a, k) => { for (let i = 0; i < a.length; i += 2) curve.push([(span[k][0] + a[i] / span[k][1]).toFixed(1), (760 + a[i + 1] / 3).toFixed(1)]); });
line(curve, '#2a82d8', 1.3);
rect(3, 948, 1712, 1, '#ddd');
const mix = ['#c060d8', '#e8a030', '#5070d8', '#e060b0', '#4a9ae8', '#e060b0', '#702050'];
for (let x = 15, i = 0; x < 1705; i++) { const w = 8 + (i * 13) % 23; rect(x, 949, Math.min(w, 1705 - x), 2, mix[(i * 5) % 7]); x += w; }

// Axes
rect(3, 956, 1708, 1, '#ddd');
rect(1715, 32, 1, 917, '#ddd');
const times = '16:52 16:54 16:57 16:58 17:00 17:02 17:03 17:07 17:08 17:10 17:13 17:15 17:18 17:20 17:24 17:25 17:28 17:31 17:37 17:38 17:40 17:42 17:43 17:44 17:46 17:46 17:48 17:50 17:51 17:52 17:55 18:00 18:03'.split(' ');
times.forEach((s, i) => { const x = Math.round(28 + i * 52.13); rect(x, 957, 1, 5, '#ddd'); text(x, 975, s, '#ddd', 'axis'); });
for (let i = 0; i < 15; i++) { const y = Math.round(74.5 + i * 53.95); rect(1716, y, 5, 1, '#ddd'); text(1724, y, (23570 - i * 10) + '.00', '#ddd', 'axis start'); }
rect(1716, 902, 5, 1, '#ddd'); text(1725, 903, '-50', '#ddd', 'axis start');
rect(1716, 945, 5, 1, '#ddd');
const tag = (y, h, s, c) => { add(`<path d="M1709 ${y}l6-${h / 2}h58v${h}h-58z" fill="${c}" stroke="#ccc"/>`); text(1724, y, s, '#fff', 'axis start tag'); };
tag(654.5, 18, '23462.50', M); tag(686.5, 18, '23456.50', '#000'); tag(861.5, 14, '0', '#8a2be2'); tag(930.5, 18, '-83.08', B);
rect(1710, 951, 63, 7, '#f4f8ff'); rect(1710, 949, 63, 2, '#4b3a9a');
add('<path d="M1725 951c0 6 5 6 5 0" fill="none" stroke="#111"/>');
document.getElementById('plot').innerHTML = out.join('');
```
